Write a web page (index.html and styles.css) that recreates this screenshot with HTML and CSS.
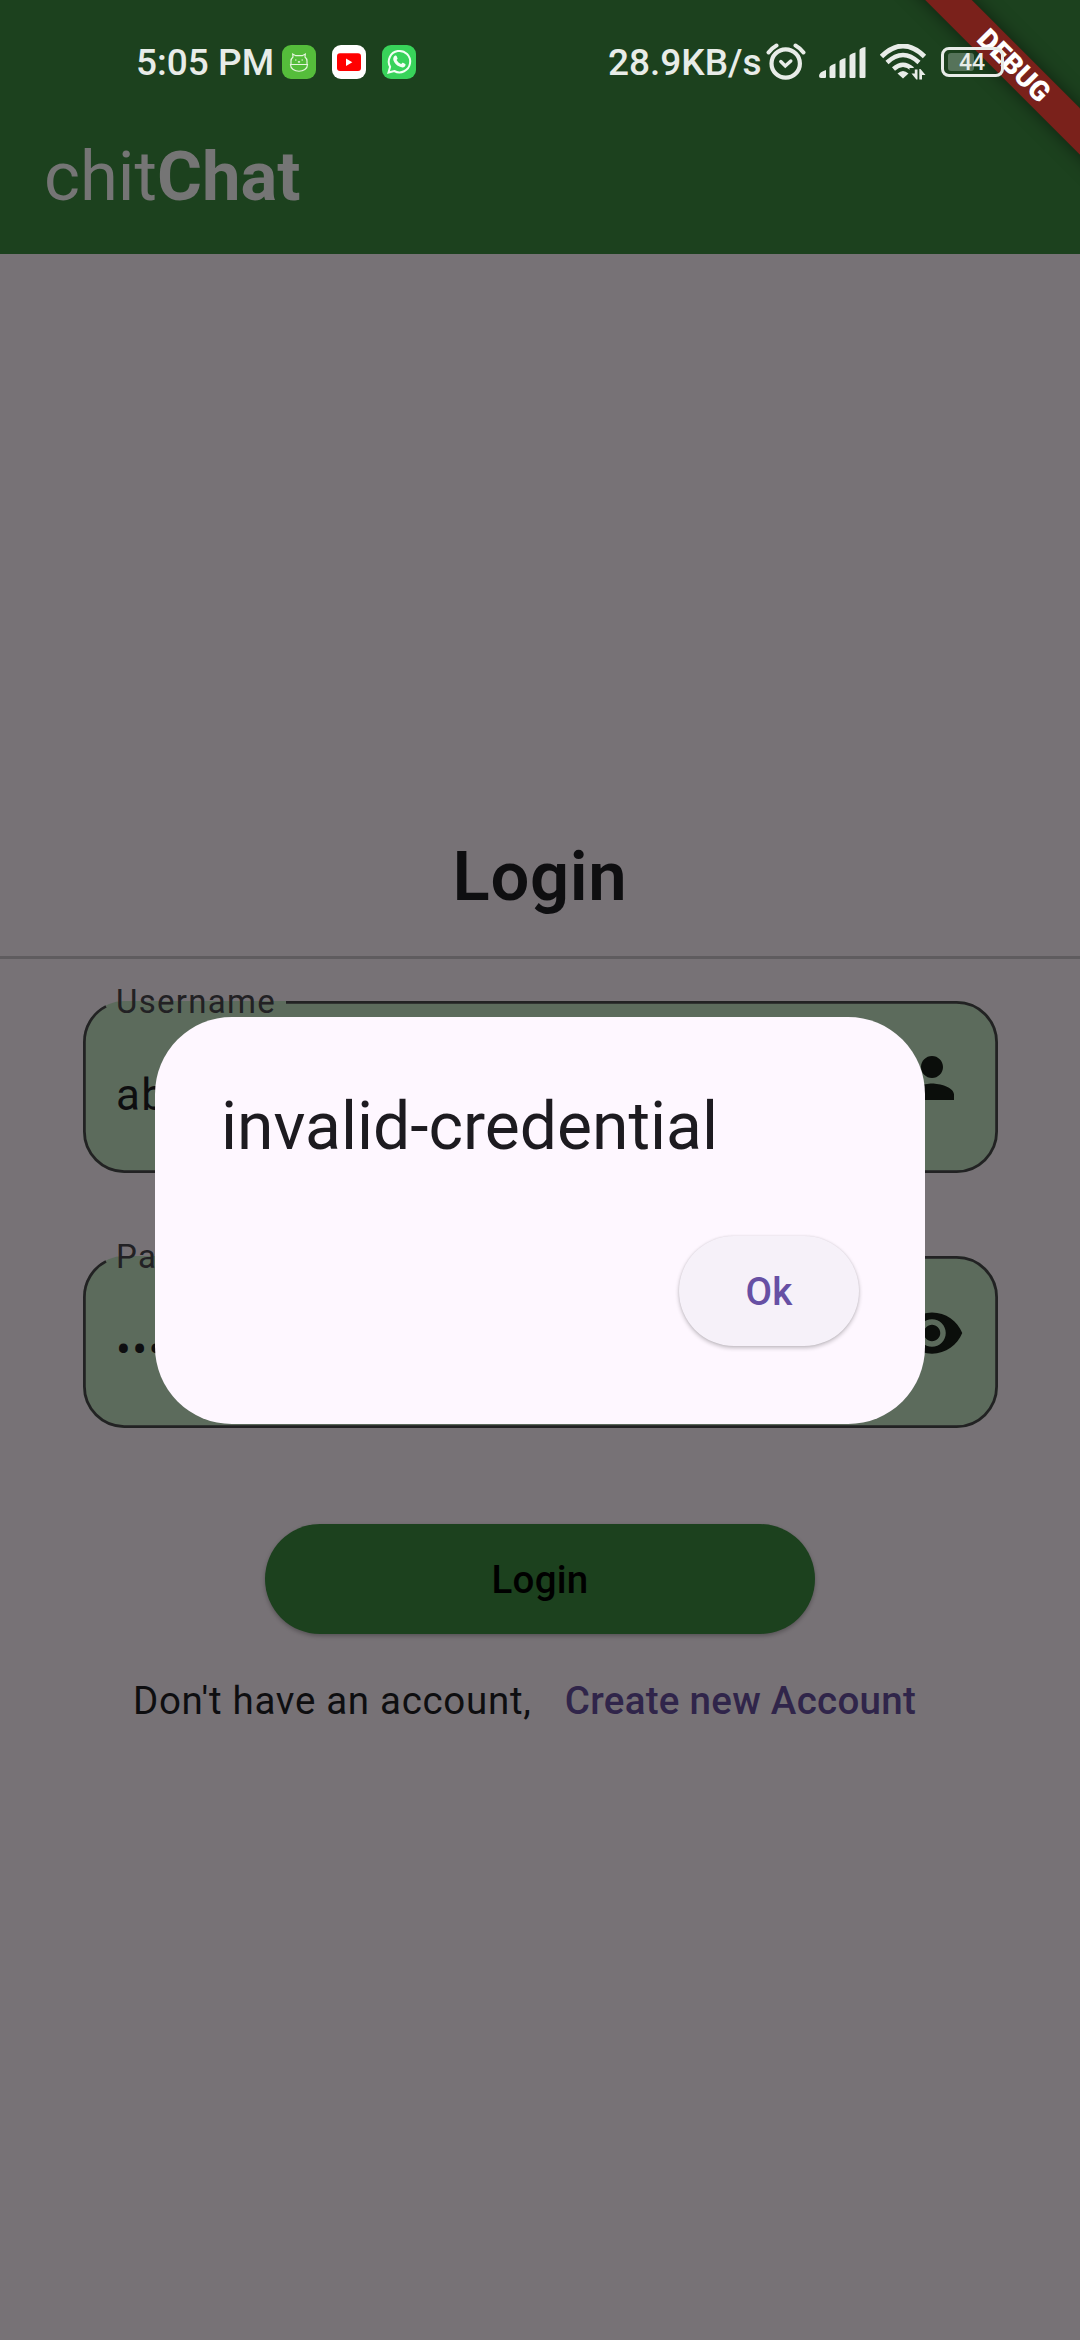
FILE: index.html
```html
<!DOCTYPE html>
<html lang="en">
<head>
<meta charset="utf-8">
<title>chitChat</title>
<link rel="stylesheet" href="styles.css">
</head>
<body>
<div class="screen">
  <header class="top">
    <div class="status">
      <span class="clock">5:05 PM</span>
      <div class="notices">
        <svg class="app" viewBox="0 0 34 34"><rect width="34" height="34" rx="9" fill="#55bd3b"/><g fill="none" stroke="#e6f6df" stroke-width="1.2"><path d="M9 19.500V16c0-2 .8-3 2-4l-.3-3 3 1.700h6.600l3-1.700-.3 3c1.200 1 2 2 2 4v3.500M8.500 19.500h17c0 9-17 9-17 0z"/><path d="M13 15h1.500M19.500 15H21M16 16.500l1 .8 1-.8"/></g></svg>
        <svg class="app" viewBox="0 0 34 34"><rect width="34" height="34" rx="9" fill="#fff"/><rect x="5" y="8.300" width="24" height="17.700" rx="3" fill="#f00"/><path d="M14 13.500v7.500l6.300-3.700z" fill="#fff"/></svg>
        <svg class="app" viewBox="0 0 34 34"><rect width="34" height="34" rx="9" fill="#38d35a"/><path d="M6.500 27.500l1.600-5.700a10.700 10.700 0 1 1 4.200 4.200z" fill="none" stroke="#f2fff4" stroke-width="2"/><path d="M12.800 10.800c.7-.6 1.500-.4 1.800.3l.9 2.100c.2.600-.2 1.100-.9 1.900 1.100 2 2.500 3.200 4.500 4 .8-1 1.300-1.700 1.900-1.400l2.300 1.200c.5.300.3 1.700-.5 2.600-1.200 1.100-3.200 1.200-5.400.1-3-1.300-5-3.600-6-6.300-.5-1.700.1-3.600 1.400-4.500z" fill="#f2fff4"/></svg>
      </div>
      <span class="speed">28.9KB/s</span>
      <svg class="alarm" viewBox="0 0 40 38" fill="none" stroke="#e8ece8" stroke-linecap="round"><circle cx="19.700" cy="20.500" r="14.200" stroke-width="4.200"/><path d="M2.500 9.500Q6 5 10.500 2.500M37.500 9.500Q34 5 29.500 2.500" stroke-width="4"/><path d="M14.800 18.500l4.500 4.500 5.500-5" stroke-width="3.400"/></svg>
      <svg class="signal" viewBox="0 0 48 31" fill="#e8ece8"><path d="M0 29q0-4 7-6v7q0 1-1 1H2q-2 0-2-2zM10.500 20.500q0-2 6-4V30q0 1-1 1h-4q-1 0-1-1zM20.500 14.500q0-2 6-3.500V30q0 1-1 1h-4q-1 0-1-1zM30.500 9q0-2 6-3.500V30q0 1-1 1h-4q-1 0-1-1zM40.500 3.500q0-2.500 6-3.500V30q0 1-1 1h-4q-1 0-1-1z"/></svg>
      <svg class="wifi" viewBox="0 0 47 36" fill="none" stroke="#e8ece8"><path d="M1.500 12.500Q23 -8.500 44.500 12.500" stroke-width="4.800"/><path d="M7 18.500Q23 3.500 39 18.500M13.500 25Q23 16.500 32.500 25" stroke-width="4.500"/><path d="M17.500 29.500Q23 24.500 28.500 29.500L23 34.500z" fill="#e8ece8" stroke="none"/><path d="M29.500 24H47V36H29.500z" fill="#1c411e" stroke="none"/><path d="M34.800 25.500h2.700V35.500h-1.200L31.500 29.500h3.300zM42 35.500h-2.700V25h1.200L45.500 31H42z" fill="#e8ece8" stroke="none"/></svg>
      <div class="battery"><span class="charge"></span><span class="percent">44</span></div>
    </div>
    <div class="appbar">chit<b>Chat</b></div>
  </header>
  <main class="content">
    <h1 class="heading">Login</h1>
    <div class="divider"></div>
    <fieldset class="field">
      <svg class="outline" viewBox="0 0 915 172" fill="none"><rect width="915" height="172" rx="41.250" fill="#5c6b5c"/><path d="M23 5.400A40 40 0 0 0 1.400 41.250V130.600A40 40 0 0 0 41.250 170.600H873.500A40 40 0 0 0 913.600 130.600V41.250A40 40 0 0 0 873.500 1.400H203" stroke="#222223" stroke-width="2.750"/></svg>
      <span class="label">Username</span>
      <span class="value">abc</span>
      <svg class="icon" viewBox="0 0 24 24"><path d="M12 12c2.210 0 4-1.790 4-4s-1.790-4-4-4-4 1.790-4 4 1.790 4 4 4zm0 2c-2.670 0-8 1.340-8 4v2h16v-2c0-2.660-5.330-4-8-4z"/></svg>
    </fieldset>
    <fieldset class="field">
      <svg class="outline" viewBox="0 0 915 172" fill="none"><rect width="915" height="172" rx="41.250" fill="#5c6b5c"/><path d="M23 5.400A40 40 0 0 0 1.400 41.250V130.600A40 40 0 0 0 41.250 170.600H873.500A40 40 0 0 0 913.600 130.600V41.250A40 40 0 0 0 873.500 1.400H203" stroke="#222223" stroke-width="2.750"/></svg>
      <span class="label">Password</span>
      <span class="value">•••</span>
      <svg class="icon" viewBox="0 0 24 24"><path d="M12 4.500C7 4.500 2.730 7.610 1 12c1.730 4.390 6 7.500 11 7.500s9.270-3.110 11-7.500c-1.730-4.390-6-7.500-11-7.500zM12 17c-2.760 0-5-2.240-5-5s2.240-5 5-5 5 2.240 5 5-2.240 5-5 5zm0-8c-1.660 0-3 1.340-3 3s1.340 3 3 3 3-1.340 3-3-1.340-3-3-3z"/></svg>
    </fieldset>
    <button class="login">Login</button>
    <p class="signup"><span>Don't have an account,</span><a class="create">Create new Account</a></p>
  </main>
  <div class="ribbon">DEBUG</div>
  <div class="dialog" role="alertdialog">
    <h2 class="title">invalid-credential</h2>
    <div class="actions"><button class="ok">Ok</button></div>
  </div>
</div>
</body>
</html>
```
FILE: styles.css
```css
* { box-sizing: border-box; }
body { margin: 0; font-family: Roboto, sans-serif; }
svg { display: block; flex: none; }
button { border: 0; font-family: inherit; padding: 0; }

.screen {
  position: relative;
  width: 1080px;
  height: 2340px;
  overflow: hidden;
  background: #777276;
}

.top { height: 254px; background: #1c411e; }

.status {
  position: relative;
  z-index: 2;
  display: flex;
  align-items: center;
  height: 100px;
  padding: 24px 0 0 135px;
  color: #e8ece8;
  font-size: 37px;
  font-weight: 500;
  line-height: 44px;
  white-space: nowrap;
}
.clock { width: 147px; padding: 2px 0 0 1px; }
.notices { display: flex; gap: 16px; width: 325px; }
.app { width: 34px; height: 34px; }
.speed { width: 159px; padding: 2px 0 0 1px; }
.alarm { width: 40px; height: 38px; margin-right: 13px; }
.signal { width: 48px; height: 31px; margin-right: 13px; }
.wifi { width: 47px; height: 36px; margin-right: 14px; }
.battery {
  position: relative;
  display: flex;
  align-items: center;
  width: 63px;
  height: 30px;
  padding: 0 0 0 4px;
  border: 3px solid #e8ece8;
  border-radius: 8px;
}
.charge {
  width: 26px;
  height: 18px;
  border-radius: 3px;
  background: #56735a;
}
.percent {
  position: absolute;
  left: 15px;
  top: 0;
  font-size: 23px;
  line-height: 26px;
}

.appbar {
  height: 154px;
  padding-left: 44px;
  color: #757575;
  font-size: 68.75px;
  line-height: 154px;
}
.appbar b { font-weight: 700; }

.content {
  display: flex;
  flex-direction: column;
  align-items: center;
  padding-top: 582px;
}
.heading {
  margin: 0;
  color: #0e0e10;
  font-size: 68.75px;
  font-weight: 600;
  line-height: 82px;
  letter-spacing: .690px;
}
.divider {
  width: 100%;
  height: 3px;
  margin: 38px 0 42px;
  background: #5f5c5f;
}

.field {
  position: relative;
  display: flex;
  justify-content: space-between;
  align-items: flex-start;
  width: 915px;
  height: 172px;
  margin: 0 0 82.500px;
  padding: 44px 32.500px 0 33.500px;
  border: 0;
}
.outline { position: absolute; inset: 0; width: 915px; height: 172px; }
.label {
  position: absolute;
  left: 33.500px;
  top: -19px;
  color: #222124;
  font-size: 33px;
  line-height: 40px;
  letter-spacing: 1.300px;
}
.value {
  position: relative;
  margin-top: 17px;
  color: #0e0e10;
  font-size: 44px;
  line-height: 66px;
  letter-spacing: 1.375px;
}
.icon { position: relative; width: 66px; height: 66px; fill: #0b0e0b; }

.login {
  width: 550px;
  height: 110px;
  margin-top: 14px;
  border-radius: 55px;
  background: #1c411e;
  box-shadow: 0 2px 4px rgba(0, 0, 0, .28);
  color: #000;
  font-size: 38.500px;
  font-weight: 500;
  letter-spacing: .275px;
}
.signup {
  display: flex;
  justify-content: space-between;
  width: 783px;
  margin: 39px 31px 0 0;
  color: #0e0e10;
  font-size: 38.500px;
  line-height: 55px;
  letter-spacing: .690px;
  white-space: nowrap;
}
.create { color: #30254a; font-weight: 500; letter-spacing: .275px; }

.ribbon {
  position: absolute;
  z-index: 1;
  right: -84px;
  top: 49px;
  width: 300px;
  height: 33px;
  background: #7a211b;
  box-shadow: 0 0 17px rgba(0, 0, 0, .5);
  color: #fff;
  font-size: 28px;
  font-weight: 900;
  line-height: 33px;
  text-align: center;
  transform: rotate(45deg);
}

.dialog {
  position: absolute;
  left: 155px;
  top: 1016.500px;
  width: 770px;
  height: 407px;
  padding: 66px;
  border-radius: 77px;
  background: #fef7ff;
}
.title {
  margin: 0;
  color: #1d1b20;
  font-size: 66px;
  font-weight: 400;
  line-height: 88px;
}
.actions { display: flex; justify-content: flex-end; margin-top: 65.500px; }
.ok {
  width: 180px;
  height: 110px;
  border-radius: 55px;
  background: #f6f1f9;
  box-shadow: 0 2px 4px rgba(0, 0, 0, .24), 0 0 2px rgba(0, 0, 0, .1);
  color: #6750a4;
  font-size: 38.500px;
  font-weight: 500;
  letter-spacing: .275px;
}
```
